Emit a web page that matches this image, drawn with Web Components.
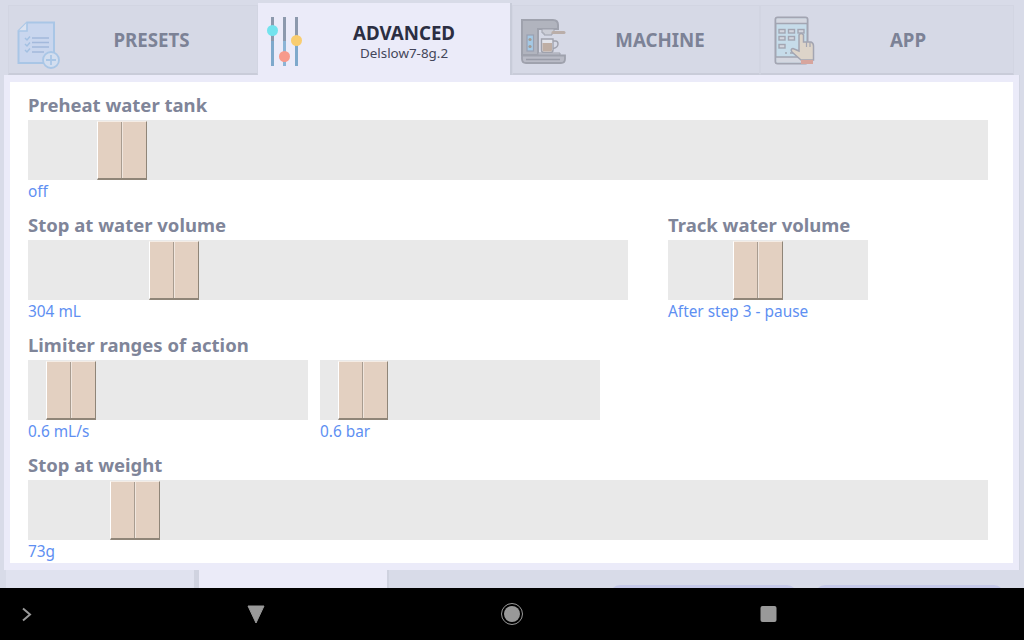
<!DOCTYPE html>
<html>
<head>
<meta charset="utf-8">
<style>
    html, body { margin: 0; padding: 0; }
    body {
        width: 1024px;
        height: 640px;
        overflow: hidden;
        background: #d8dbe8;
        font-family: "Noto Sans", sans-serif;
    }
</style>
</head>
<body>
<settings-page>
    <top-tabs slot="tabs">
        <top-tab label="PRESETS" icon="presets" style="width:250px;--pad:27px"></top-tab>
        <top-tab label="ADVANCED" sub="Delslow7-8g.2" icon="advanced" active style="width:254px;--pad:24px"></top-tab>
        <top-tab label="MACHINE" icon="machine" style="width:248px;--pad:16px"></top-tab>
        <top-tab label="APP" icon="app" style="width:254px;--pad:22px"></top-tab>
    </top-tabs>
    <settings-panel slot="panel">
        <setting-row>
            <setting-group label="Preheat water tank">
                <setting-slider width="960" at="69" value="off"></setting-slider>
            </setting-group>
        </setting-row>
        <setting-row>
            <setting-group label="Stop at water volume" style="margin-right:40px">
                <setting-slider width="600" at="121" value="304 mL"></setting-slider>
            </setting-group>
            <setting-group label="Track water volume">
                <setting-slider width="200" at="65" value="After step 3 - pause"></setting-slider>
            </setting-group>
        </setting-row>
        <setting-row>
            <setting-group label="Limiter ranges of action">
                <setting-slider width="280" at="18" value="0.6 mL/s" style="margin-right:12px"></setting-slider>
                <setting-slider width="280" at="18" value="0.6 bar"></setting-slider>
            </setting-group>
        </setting-row>
        <setting-row>
            <setting-group label="Stop at weight">
                <setting-slider width="960" at="82" value="73g"></setting-slider>
            </setting-group>
        </setting-row>
    </settings-panel>
    <lower-tabs slot="lower"></lower-tabs>
    <nav-bar slot="nav"></nav-bar>
</settings-page>

<script>
/* icons for the top tabs. each viewBox starts at its tab's corner, so the numbers are page pixels */
const ICONS = {
    presets: `<svg width="64" height="68" viewBox="9 6 64 68" fill="none">
        <path d="M27 22.5H54V63H18.5V31Z" fill="#c9d6ee" stroke="#a9c6e6" stroke-width="2"/>
        <path d="M27 22.5V31H18.5" fill="#dbe2f0" stroke="#a9c6e6" stroke-width="1.6"/>
        <path d="M25 38l2 2 3-3.5M25 44l2 2 3-3.5M25 50l2 2 3-3.5" stroke="#a3c0e2" stroke-width="1.5"/>
        <path d="M32 38H49M32 42.5H49M32 47H49M32 52H44" stroke="#a3b9dc" stroke-width="1.5"/>
        <circle cx="51" cy="60" r="8" fill="#d3deef" stroke="#a9c6e6" stroke-width="1.8"/>
        <path d="M51 55V65M46 60H56" stroke="#a9c6e6" stroke-width="1.8"/>
    </svg>`,
    advanced: `<svg width="64" height="68" viewBox="258 3 64 68" fill="none">
        <path d="M272.5 17V41" stroke="#8c99ad" stroke-width="3"/>
        <path d="M272.5 41V66" stroke="#7ea9cc" stroke-width="3"/>
        <path d="M284.5 17V41" stroke="#8c99ad" stroke-width="3"/>
        <path d="M284.5 41V66" stroke="#8bb4d6" stroke-width="3"/>
        <path d="M296.5 17V41" stroke="#8c99ad" stroke-width="3"/>
        <path d="M296.5 41V66" stroke="#7ea9cc" stroke-width="3"/>
        <circle cx="272.5" cy="30.5" r="5.5" fill="#73e3ee"/>
        <circle cx="284.5" cy="56.5" r="5.5" fill="#f79a8c"/>
        <circle cx="296.5" cy="40.5" r="5.5" fill="#f9cd70"/>
    </svg>`,
    machine: `<svg width="64" height="68" viewBox="513 6 64 68" fill="none" opacity=".85">
        <path d="M522 20H553Q558 20 558 25V29H538V55H522Z" fill="#abadb7" stroke="#9698a3" stroke-width="2"/>
        <rect x="527" y="35" width="6.5" height="16" fill="#9cc6e4" stroke="#8f97a8" stroke-width="1.2"/>
        <circle cx="530" cy="39.5" r="1.6" fill="#9a8f84"/><circle cx="530" cy="46.5" r="1.6" fill="#9a8f84"/>
        <path d="M542 29H554V33H552V35H544V33H542Z" fill="#c9cbd3" stroke="#9698a3" stroke-width="1"/>
        <path d="M553 32.5H564" stroke="#b6a69e" stroke-width="3" stroke-linecap="round"/>
        <path d="M541.5 39H553V50Q553 52.5 550.5 52.5H544Q541.5 52.5 541.5 50Z" fill="#e6e6ec" stroke="#9698a3" stroke-width="1.4"/>
        <path d="M542.5 43H552V50Q552 51.5 550.5 51.5H544Q542.5 51.5 542.5 50Z" fill="#bba698"/>
        <path d="M553 41H555.5Q558 41 558 44Q558 47.5 553 48.5" stroke="#9698a3" stroke-width="1.4"/>
        <path d="M538 53H560V55H538Z" fill="#c9cbd3" stroke="#9698a3" stroke-width="1"/>
        <path d="M522 55.5H565V59Q565 63 561 63H526Q522 63 522 59Z" fill="#b4b6c0" stroke="#9698a3" stroke-width="1.8"/>
        <path d="M526 59.5H560" stroke="#8f919d" stroke-width="1.3"/>
    </svg>`,
    app: `<svg width="64" height="68" viewBox="761 6 64 68" fill="none" opacity=".85">
        <rect x="775.5" y="17.5" width="32" height="46" rx="2" fill="#c3dcea" stroke="#9a9ca8" stroke-width="2"/>
        <rect x="776.5" y="18.5" width="30" height="4.5" fill="#d4d6df"/>
        <rect x="776.5" y="57" width="30" height="5.5" fill="#d4d6df"/>
        <path d="M776 23.5H807M776 57H800" stroke="#9a9ca8" stroke-width="1.6"/>
        <g stroke="#9a9ca8" stroke-width="1.4" fill="#d3d5dd">
            <rect x="779" y="29.5" width="6" height="3.5"/><rect x="788.5" y="29.5" width="6" height="3.5"/><rect x="798" y="29.5" width="6" height="3.5"/>
            <rect x="779" y="36.5" width="6" height="3.5"/><rect x="788.5" y="36.5" width="6" height="3.5"/>
            <rect x="779" y="44.5" width="6" height="3.5"/>
        </g>
        <path d="M785 53H794" stroke="#9a9ca8" stroke-width="1.4" stroke-dasharray="2 3 6 0"/>
        <path d="M801 60L792 52Q790 49 793 48.5L799 51V35Q801 32 803.5 35V42H811Q813.5 43 813.5 46V60Z" fill="#dfd3c4" stroke="#9a9ca8" stroke-width="1.5"/>
        <path d="M806.5 42V47M810 42V47" stroke="#9a9ca8" stroke-width="1.2"/>
        <rect x="801" y="60" width="12" height="4" fill="#d79c90"/>
    </svg>`
};

class TopTabs extends HTMLElement {
    constructor() {
        super();
        this.attachShadow({ mode: 'open' }).innerHTML = `
            <style>
                :host { display: flex; height: 75px; padding-left: 8px; align-items: flex-end; }
            </style>
            <slot></slot>
        `;
    }
}

class TopTab extends HTMLElement {
    constructor() {
        super();
        const sub = this.getAttribute('sub');
        this.attachShadow({ mode: 'open' }).innerHTML = `
            <style>
                :host {
                    display: block;
                    box-sizing: border-box;
                    height: 70px;
                    flex: none;
                    background: #d6d9e6;
                    border: 1px solid #d2d5e2;
                    border-bottom: 2px solid #c9ccd9;
                    color: #7c8296;
                }
                :host([active]) {
                    height: 72px;
                    background: #ebebf9;
                    border: none;
                    border-right: 2px solid #c8ccd9;
                    color: #2b2e42;
                }
                .wrap { display: flex; height: 100%; overflow: hidden; }
                .icon { flex: none; width: 64px; height: 68px; filter: blur(.4px); }
                .text {
                    flex: 1;
                    display: flex;
                    flex-direction: column;
                    align-items: center;
                    justify-content: center;
                    padding-right: var(--pad);
                }
                :host(:not([active])) .text { margin-top: 1px; }
                :host([active]) .text { margin-top: 4px; }
                .label { font-size: 18.7px; font-weight: 700; line-height: 24px; }
                .sub { font-size: 13.4px; line-height: 16px; color: #43465a; }
            </style>
            <div class="wrap">
                <div class="icon">${ICONS[this.getAttribute('icon')]}</div>
                <div class="text">
                    <span class="label">${this.getAttribute('label')}</span>
                    ${sub ? `<span class="sub">${sub}</span>` : ''}
                </div>
            </div>
        `;
    }
}

class SettingsPage extends HTMLElement {
    constructor() {
        super();
        this.attachShadow({ mode: 'open' }).innerHTML = `
            <style>
                :host { display: flex; flex-direction: column; width: 1024px; height: 640px; overflow: hidden; }
            </style>
            <slot name="tabs"></slot>
            <slot name="panel"></slot>
            <slot name="lower"></slot>
            <slot name="nav"></slot>
        `;
    }
}

class SettingsPanel extends HTMLElement {
    constructor() {
        super();
        this.attachShadow({ mode: 'open' }).innerHTML = `
            <style>
                :host {
                    display: block;
                    box-sizing: border-box;
                    width: 1016px;
                    height: 495px;
                    margin-left: 4px;
                    padding: 7px 6px;
                    background: #ebebf9;
                    border-right: 1px solid #d2d5e2;
                }
                .inner {
                    box-sizing: border-box;
                    height: 100%;
                    background: #fff;
                    padding-top: 11px;
                    padding-left: 18px;
                    overflow: hidden;
                }
            </style>
            <div class="inner"><slot></slot></div>
        `;
    }
}

class SettingRow extends HTMLElement {
    constructor() {
        super();
        this.attachShadow({ mode: 'open' }).innerHTML = `
            <style>
                :host { display: flex; height: 120px; }
            </style>
            <slot></slot>
        `;
    }
}

class SettingGroup extends HTMLElement {
    constructor() {
        super();
        this.attachShadow({ mode: 'open' }).innerHTML = `
            <style>
                :host { display: block; flex: none; }
                .label {
                    height: 27px;
                    line-height: 24px;
                    font-size: 18.5px;
                    font-weight: 700;
                    color: #7f8599;
                }
                .sliders { display: flex; }
            </style>
            <div class="label">${this.getAttribute('label')}</div>
            <div class="sliders"><slot></slot></div>
        `;
    }
}

class SettingSlider extends HTMLElement {
    constructor() {
        super();
        this.attachShadow({ mode: 'open' }).innerHTML = `
            <style>
                :host { display: block; flex: none; width: ${this.getAttribute('width')}px; }
                .track { display: flex; height: 60px; background: #e9e9e9; }
                .thumb {
                    display: flex;
                    box-sizing: border-box;
                    width: 50px;
                    height: 59px;
                    margin-top: 1px;
                    margin-left: ${this.getAttribute('at')}px;
                    background: #e3d0c1;
                    border: 1px solid #8f8578;
                    border-top-color: #f4ece5;
                    border-left-color: #ffffff;
                    border-bottom-width: 2px;
                }
                .half { flex: 1; }
                .half + .half { border-left: 1px solid #f0e6de; box-shadow: -1px 0 0 #a89c90; }
                .value {
                    font-size: 15.4px;
                    line-height: 24px;
                    color: #5e8ff2;
                    white-space: nowrap;
                }
            </style>
            <div class="track">
                <div class="thumb"><div class="half"></div><div class="half"></div></div>
            </div>
            <div class="value">${this.getAttribute('value')}</div>
        `;
    }
}

class LowerTabs extends HTMLElement {
    constructor() {
        super();
        this.attachShadow({ mode: 'open' }).innerHTML = `
            <style>
                :host {
                    display: flex;
                    flex: none;
                    height: 18px;
                    overflow: hidden;
                    padding-left: 6px;
                    font-size: 18.7px;
                    font-weight: 700;
                    color: #7c8296;
                }
                .tab {
                    flex: none;
                    box-sizing: border-box;
                    height: 40px;
                    text-align: center;
                    padding-top: 15px;
                    line-height: 24px;
                }
                .one { width: 193px; background: #e0e2ef; border-right: 5px solid #d0d3e0; }
                .two { width: 190px; background: #ebebf8; border-right: 2px solid #cfd2df; color: #2b2e42; }
                .pill {
                    flex: none;
                    height: 30px;
                    margin-top: 15px;
                    border-radius: 10px;
                    background: #c5c8e8;
                }
                .p1 { width: 187px; margin-left: 221px; }
                .p2 { width: 189px; margin-left: 18px; }
            </style>
            <div class="tab one">Save</div>
            <div class="tab two">Undo</div>
            <div class="pill p1"></div>
            <div class="pill p2"></div>
        `;
    }
}

class NavBar extends HTMLElement {
    constructor() {
        super();
        this.attachShadow({ mode: 'open' }).innerHTML = `
            <style>
                :host {
                    display: block;
                    flex: none;
                    height: 52px;
                    background: #000;
                }
                svg { display: block; }
            </style>
            <svg width="1024" height="52" viewBox="0 0 1024 52">
                <path d="M23 20.5L30 26.5L23 32.5" fill="none" stroke="#999" stroke-width="2"/>
                <path d="M248 18H264L256 35Z" fill="#999" stroke="#999" stroke-width="1" stroke-linejoin="round"/>
                <circle cx="512" cy="26" r="10.5" fill="none" stroke="#999" stroke-width="1"/>
                <circle cx="512" cy="26" r="8" fill="#999"/>
                <rect x="760.5" y="18" width="16" height="16" rx="2" fill="#999"/>
            </svg>
        `;
    }
}

customElements.define('top-tabs', TopTabs);
customElements.define('top-tab', TopTab);
customElements.define('settings-page', SettingsPage);
customElements.define('settings-panel', SettingsPanel);
customElements.define('setting-row', SettingRow);
customElements.define('setting-group', SettingGroup);
customElements.define('setting-slider', SettingSlider);
customElements.define('lower-tabs', LowerTabs);
customElements.define('nav-bar', NavBar);
</script>
</body>
</html>
